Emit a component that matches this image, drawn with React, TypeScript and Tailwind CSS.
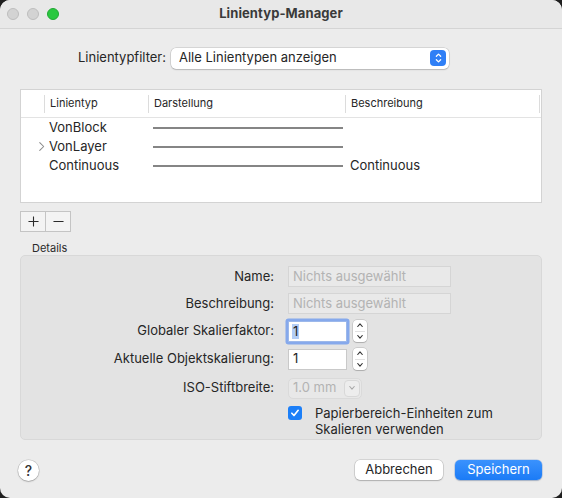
import React from "react";

function UpDown({ className = "" }: { className?: string }) {
  return (
    <svg viewBox="0 0 10 14" className={className} fill="none" stroke="currentColor" strokeWidth="1.5" strokeLinecap="round" strokeLinejoin="round">
      <path d="M2.5 5 L5 2.5 L7.5 5" />
      <path d="M2.5 9 L5 11.5 L7.5 9" />
    </svg>
  );
}

function Stepper() {
  return (
    <div className="ml-[6px] w-[14px] h-[22px] rounded-[4px] bg-white shadow-[0_0_0_0.5px_rgba(0,0,0,0.2),0_1px_1px_rgba(0,0,0,0.15)] flex flex-col items-center justify-between py-[2px] text-[#333]">
      <svg viewBox="0 0 10 8" className="w-[8px] h-[6px]" fill="none" stroke="currentColor" strokeWidth="1.5" strokeLinecap="round" strokeLinejoin="round">
        <path d="M2 6 L5 2.5 L8 6" />
      </svg>
      <div className="w-[10px] h-px bg-[#e2e2e2]" />
      <svg viewBox="0 0 10 8" className="w-[8px] h-[6px]" fill="none" stroke="currentColor" strokeWidth="1.5" strokeLinecap="round" strokeLinejoin="round">
        <path d="M2 2 L5 5.5 L8 2" />
      </svg>
    </div>
  );
}

function LineSample() {
  return <div className="w-[190px] h-[2px] bg-[#858585]" />;
}

export default function App() {
  return (
    <div className="w-[562px] h-[498px] bg-[#1f1f1f] font-['Inter',sans-serif] text-[13px] text-[#262626] antialiased">
      <div className="w-full h-full rounded-[10px] bg-[#ececec] overflow-hidden flex flex-col">
        {/* Title bar */}
        <div className="relative h-[29px] shrink-0 bg-[#e8e8e8] border-b border-[#d4d4d4] flex items-center justify-center">
          <div className="absolute left-[7px] top-[8px] flex gap-[8px]">
            <div className="w-[12px] h-[12px] rounded-full bg-[#d3d3d3] border border-[#bdbdbd]" />
            <div className="w-[12px] h-[12px] rounded-full bg-[#d3d3d3] border border-[#bdbdbd]" />
            <div className="w-[12px] h-[12px] rounded-full bg-[#2ac840] border border-[#22a834]" />
          </div>
          <span className="font-bold text-[13px] text-[#3a3a3a] tracking-[0.1px]">Linientyp-Manager</span>
        </div>

        <div className="flex-1 flex flex-col px-[20px]">
          {/* Filter row */}
          <div className="mt-[18px] flex items-center h-[22px]">
            <div className="w-[147px] text-right pr-[1px]">Linientypfilter:</div>
            <div className="ml-[4px] w-[278px] h-[21px] rounded-[5px] bg-white shadow-[0_0_0_0.5px_rgba(0,0,0,0.18),0_1px_1.5px_rgba(0,0,0,0.15)] flex items-center justify-between pl-[8px] pr-[3px]">
              <span>Alle Linientypen anzeigen</span>
              <div className="w-[16px] h-[16px] rounded-[4px] bg-[#2f7ff6] flex items-center justify-center text-white">
                <UpDown className="w-[9px] h-[12px]" />
              </div>
            </div>
          </div>

          {/* Table */}
          <div className="mt-[20px] h-[114px] bg-white border border-[#d3d3d3] flex flex-col">
            <div className="h-[28px] border-b border-[#e3e3e3] flex items-center text-[11px] text-[#262626]">
              <div className="w-[24px] h-[18px] border-r border-[#dcdcdc]" />
              <div className="w-[104px] h-[18px] border-r border-[#dcdcdc] pl-[5px] flex items-center">Linientyp</div>
              <div className="w-[197px] h-[18px] border-r border-[#dcdcdc] pl-[5px] flex items-center">Darstellung</div>
              <div className="w-[194px] h-[18px] border-r border-[#dcdcdc] pl-[5px] flex items-center">Beschreibung</div>
            </div>
            <div>
              {[
                { name: "VonBlock", desc: "", chevron: false },
                { name: "VonLayer", desc: "", chevron: true },
                { name: "Continuous", desc: "Continuous", chevron: false },
              ].map((r) => (
                <div key={r.name} className="h-[19px] flex items-center">
                  <div className="w-[28px] flex items-center justify-end pr-[4px]">
                    {r.chevron && (
                      <svg viewBox="0 0 8 12" className="w-[7px] h-[11px]" fill="none" stroke="#8a8a8a" strokeWidth="1.2" strokeLinecap="round" strokeLinejoin="round">
                        <path d="M2 1.5 L6.5 6 L2 10.5" />
                      </svg>
                    )}
                  </div>
                  <div className="w-[104px]">{r.name}</div>
                  <div className="w-[197px]"><LineSample /></div>
                  <div>{r.desc}</div>
                </div>
              ))}
            </div>
          </div>

          {/* +/- */}
          <div className="mt-[8px] flex w-[51px] h-[21px] border border-[#c4c4c4] bg-[#f3f3f3]">
            <div className="w-[25px] border-r border-[#c4c4c4] flex items-center justify-center">
              <svg viewBox="0 0 12 12" className="w-[11px] h-[11px]" stroke="#2a2a2a" strokeWidth="1.2"><path d="M6 0.5 V11.5 M0.5 6 H11.5" /></svg>
            </div>
            <div className="flex-1 flex items-center justify-center">
              <svg viewBox="0 0 12 12" className="w-[11px] h-[11px]" stroke="#2a2a2a" strokeWidth="1.2"><path d="M0.5 6 H11.5" /></svg>
            </div>
          </div>

          <div className="mt-[9px] pl-[12px] text-[11px] leading-[14px] text-[#2a2a2a]">Details</div>

          {/* Details box */}
          <div className="mt-[0px] h-[185px] rounded-[5px] bg-[#e3e3e3] border border-[#d8d8d8] pt-[10px]">
            <div className="flex items-center h-[21px]">
              <div className="w-[253px] text-right">Name:</div>
              <div className="ml-[14px] w-[163px] h-[21px] bg-[#e9e9e9] border border-[#d5d5d5] flex items-center pl-[4px] text-[#b3b3b3]">Nichts ausgewählt</div>
            </div>
            <div className="mt-[6px] flex items-center h-[21px]">
              <div className="w-[253px] text-right">Beschreibung:</div>
              <div className="ml-[14px] w-[163px] h-[21px] bg-[#e9e9e9] border border-[#d5d5d5] flex items-center pl-[4px] text-[#b3b3b3]">Nichts ausgewählt</div>
            </div>
            <div className="mt-[6px] flex items-center h-[22px]">
              <div className="w-[253px] text-right">Globaler Skalierfaktor:</div>
              <div className="ml-[14px] w-[59px] h-[21px] bg-white border border-[#9cb8ea] shadow-[0_0_0_2.5px_#86a9ec] rounded-[1px] flex items-center pl-[3px]">
                <span className="bg-[#b3cdf6] px-[1px] leading-[15px]">1</span>
              </div>
              <Stepper />
            </div>
            <div className="mt-[6px] flex items-center h-[22px]">
              <div className="w-[253px] text-right">Aktuelle Objektskalierung:</div>
              <div className="ml-[14px] w-[59px] h-[21px] bg-white border border-[#c9c9c9] flex items-center pl-[4px]">1</div>
              <Stepper />
            </div>
            <div className="mt-[7px] flex items-center h-[22px]">
              <div className="w-[253px] text-right">ISO-Stiftbreite:</div>
              <div className="ml-[14px] w-[74px] h-[21px] rounded-[5px] bg-[#e8e8e8] border border-[#dadada] flex items-center justify-between pl-[4px] pr-[1px] text-[#b3b3b3]">
                <span>1.0 mm</span>
                <div className="w-[16px] h-[17px] rounded-[4px] bg-[#ededed] border border-[#d8d8d8] flex items-center justify-center">
                  <svg viewBox="0 0 10 8" className="w-[8px] h-[6px]" fill="none" stroke="#a8a8a8" strokeWidth="1.4" strokeLinecap="round" strokeLinejoin="round"><path d="M2 2 L5 5.5 L8 2" /></svg>
                </div>
              </div>
            </div>
            <div className="mt-[6px] flex items-start">
              <div className="w-[253px]" />
              <div className="ml-[14px] mt-[1px] w-[14px] h-[14px] rounded-[3px] bg-[#1c7ff8] flex items-center justify-center">
                <svg viewBox="0 0 12 12" className="w-[10px] h-[10px]" fill="none" stroke="white" strokeWidth="2" strokeLinecap="round" strokeLinejoin="round"><path d="M2.2 6.3 L4.8 9 L9.8 2.8" /></svg>
              </div>
              <div className="ml-[13px] leading-[16px] text-[13px]">Papierbereich-Einheiten zum<br />Skalieren verwenden</div>
            </div>
          </div>

          {/* Footer */}
          <div className="mt-[19px] flex items-center h-[22px]">
            <div className="-ml-[2px] w-[21px] h-[21px] rounded-full bg-white shadow-[0_0_0_0.5px_rgba(0,0,0,0.18),0_1px_1.5px_rgba(0,0,0,0.2)] flex items-center justify-center text-[14px] font-medium text-[#333]">?</div>
            <div className="flex-1" />
            <div className="w-[88px] h-[20px] rounded-[5px] bg-white shadow-[0_0_0_0.5px_rgba(0,0,0,0.2),0_1px_1.5px_rgba(0,0,0,0.18)] flex items-center justify-center">Abbrechen</div>
            <div className="ml-[12px] w-[87px] h-[20px] rounded-[5px] bg-gradient-to-b from-[#3a92fd] to-[#1a7bf6] shadow-[0_0_0_0.5px_rgba(0,80,200,0.3),0_1px_1.5px_rgba(0,0,0,0.18)] flex items-center justify-center text-white">Speichern</div>
          </div>
        </div>
      </div>
    </div>
  );
}
